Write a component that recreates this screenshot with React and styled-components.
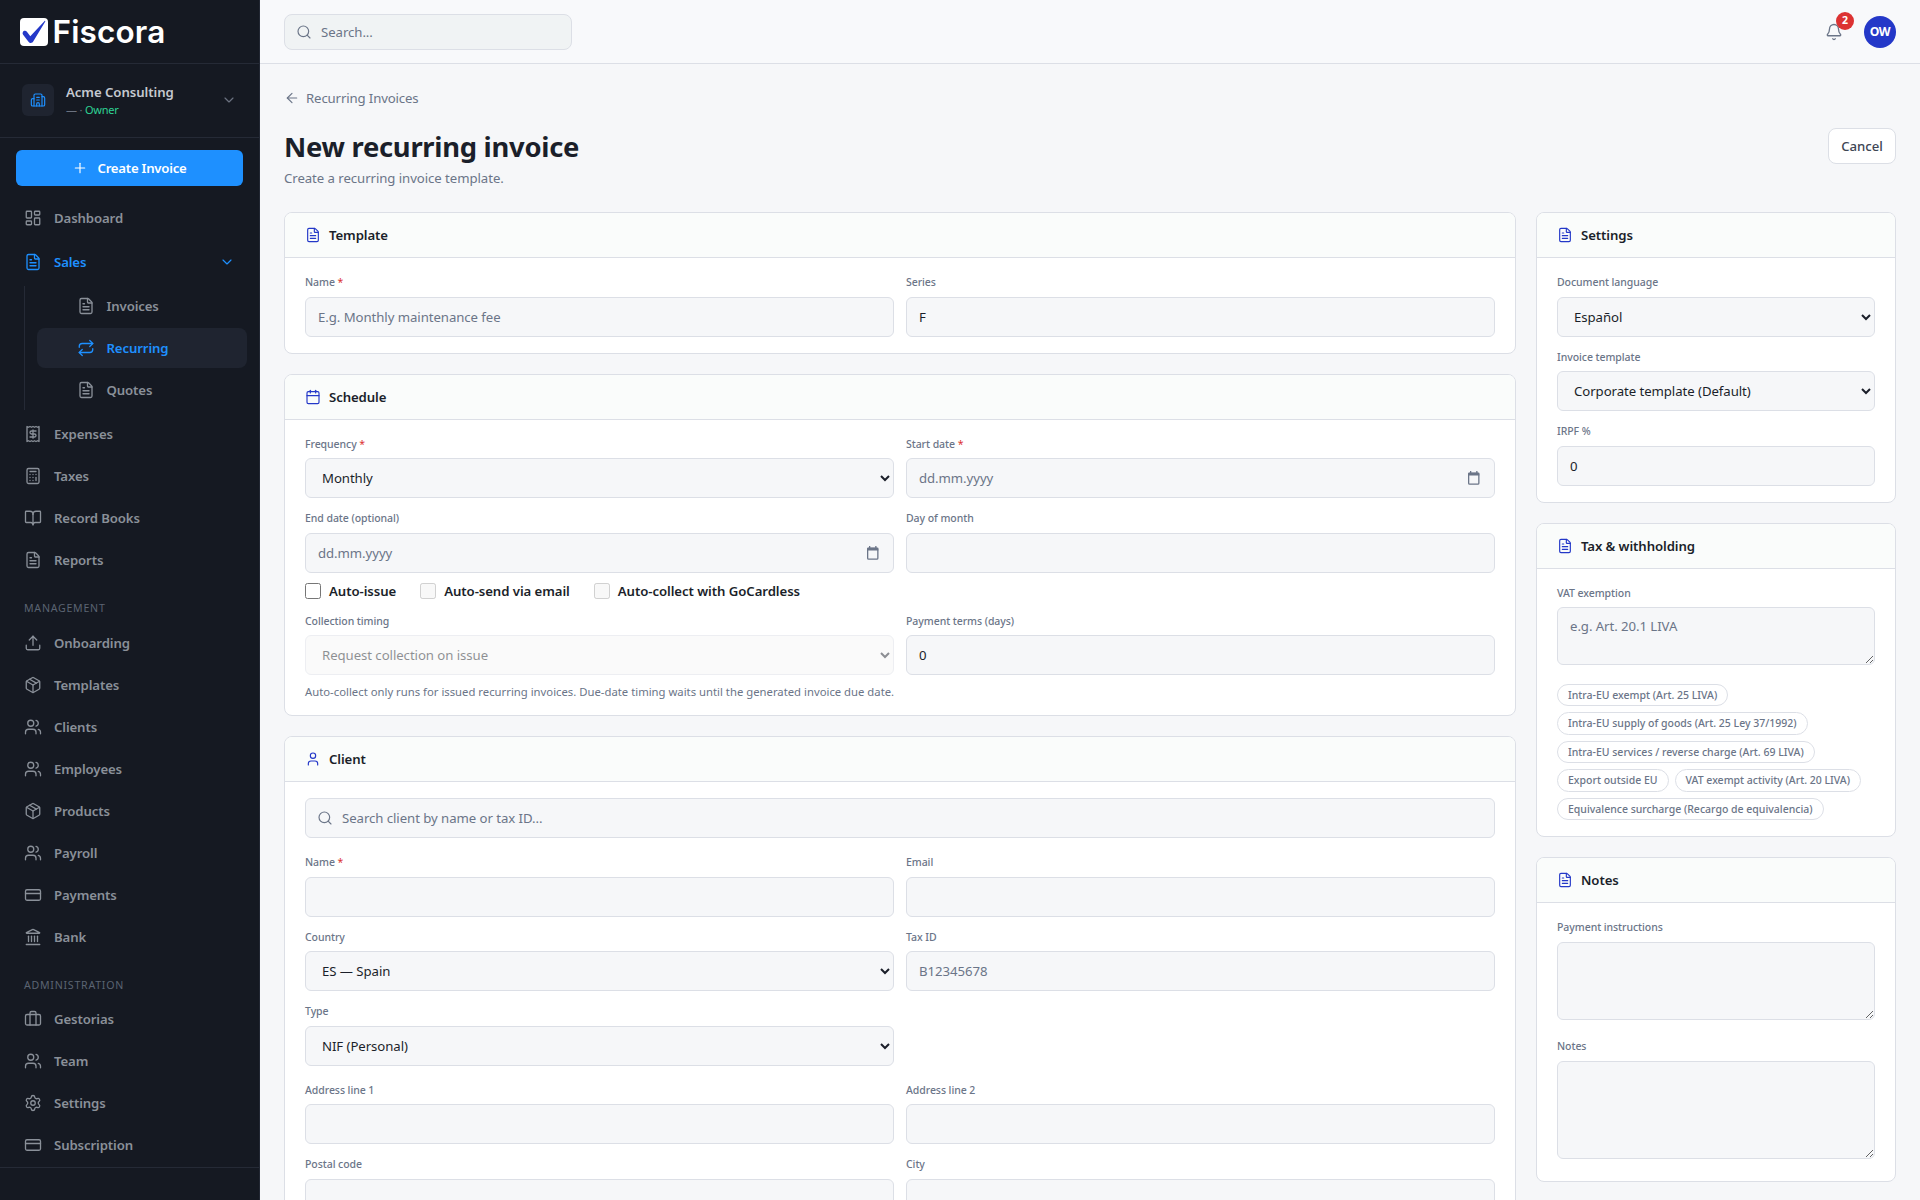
import React from "react";
import styled, { createGlobalStyle, css } from "styled-components";
import {
  ArrowLeft,
  Bell,
  BookOpen,
  Briefcase,
  Building2,
  Calculator,
  Calendar,
  ChevronDown,
  CreditCard,
  FileText,
  Landmark,
  LayoutDashboard,
  Package,
  Plus,
  Receipt,
  Repeat,
  Search,
  Settings,
  Upload,
  User,
  Users,
} from "lucide-react";

const GlobalStyle = createGlobalStyle`
  * {
    box-sizing: border-box;
  }
  body {
    margin: 0;
    overflow: hidden;
    background-color: #f6f7f9;
    color: #1b1f2a;
    font-family: "Noto Sans", "Open Sans", sans-serif;
    font-size: 13.2px;
    letter-spacing: -0.06px;
  }
  input, select, textarea, button {
    font-family: inherit;
    font-size: inherit;
    letter-spacing: inherit;
  }
`;

const Layout = styled.div`
  display: flex;
  width: 1920px;
  height: 1200px;
  overflow: hidden;
`;

/* ---------- sidebar ---------- */

const Sidebar = styled.aside`
  width: 260px;
  flex-shrink: 0;
  display: flex;
  flex-direction: column;
  background-color: #151922;
  border-right: 1px solid #222733;
`;

const LogoRow = styled.div`
  height: 64px;
  flex-shrink: 0;
  display: flex;
  align-items: center;
  gap: 4.5px;
  padding-left: 20px;
  border-bottom: 1px solid #252a36;
`;

const LogoText = styled.span`
  padding-top: 1px;
  font-family: Inter, sans-serif;
  font-size: 31.5px;
  font-weight: 600;
  line-height: 32px;
  letter-spacing: 0.15px;
  color: #ffffff;
`;

const TeamSwitcher = styled.div`
  height: 74px;
  flex-shrink: 0;
  display: flex;
  align-items: center;
  padding: 0 22px 2px;
  border-bottom: 1px solid #252a36;
  color: #6b7280;
`;

const TeamIcon = styled.div`
  width: 32px;
  height: 32px;
  display: flex;
  align-items: center;
  justify-content: center;
  margin-right: 12px;
  border-radius: 6px;
  background-color: #1f2430;
  color: #1e90ff;
`;

const TeamInfo = styled.div`
  flex: 1;
`;

const TeamName = styled.div`
  font-size: 13.2px;
  font-weight: 600;
  line-height: 20px;
  color: #c5c9d1;
`;

const TeamRole = styled.div`
  font-size: 11px;
  line-height: 16px;
  letter-spacing: -0.2px;
  color: #6b7280;
  span {
    color: #2ed394;
  }
`;

const CreateButton = styled.button`
  height: 36px;
  flex-shrink: 0;
  display: flex;
  align-items: center;
  justify-content: center;
  gap: 9px;
  margin: 12px 16px;
  border: none;
  border-radius: 6px;
  background-color: #1e90ff;
  color: #ffffff;
  font-size: 13.2px;
  font-weight: 600;
  letter-spacing: -0.25px;
`;

const Nav = styled.nav`
  flex: 1;
  display: flex;
  flex-direction: column;
  gap: 2px;
  padding: 0 12px;
`;

const NavItem = styled.div`
  height: 40px;
  flex-shrink: 0;
  display: flex;
  align-items: center;
  gap: ${(props) => (props.$nested ? "11.5px" : "12px")};
  padding: 0 12px 0 ${(props) => (props.$nested ? "40px" : "12px")};
  border-radius: 8px;
  color: ${(props) => (props.$active ? "#1e90ff" : "#8a9099")};
  background-color: ${(props) => (props.$selected ? "#1f2430" : "transparent")};
  font-weight: 600;
  letter-spacing: -0.12px;
  span {
    flex: 1;
  }
`;

const SubNav = styled.div`
  display: flex;
  flex-direction: column;
  gap: 2px;
  margin: 4px 0 2px 12px;
  padding-left: 12px;
  border-left: 1px solid #252a36;
`;

const NavGroup = styled.div`
  padding-top: 2px;
`;

const NavHeading = styled.div`
  height: 38.5px;
  flex-shrink: 0;
  padding: 18px 12px 0;
  font-size: 10.6px;
  line-height: 16px;
  letter-spacing: 0.75px;
  color: #5b6472;
`;

const SidebarFooter = styled.div`
  height: 33px;
  flex-shrink: 0;
  border-top: 1px solid #252a36;
`;

/* ---------- top bar ---------- */

const Main = styled.div`
  flex: 1;
  min-width: 0;
`;

const TopBar = styled.header`
  height: 64px;
  display: flex;
  align-items: center;
  justify-content: space-between;
  padding: 0 24px;
  background-color: #f8f9fb;
  border-bottom: 1px solid #dcdfe6;
`;

const SearchBox = styled.div`
  width: 288px;
  height: 36px;
  display: flex;
  align-items: center;
  gap: 9px;
  padding: 0 11px;
  border: 1px solid #dcdfe6;
  border-radius: 8px;
  background-color: #f0f3f4;
  color: #6b7588;
`;

const TopActions = styled.div`
  display: flex;
  align-items: center;
  gap: 21px;
`;

const BellButton = styled.div`
  position: relative;
  display: flex;
  color: #6b7588;
`;

const Badge = styled.span`
  position: absolute;
  top: -11px;
  left: 11px;
  width: 18px;
  height: 18px;
  border-radius: 50%;
  background-color: #dc3232;
  color: #ffffff;
  font-size: 10.5px;
  font-weight: 700;
  line-height: 17px;
  text-align: center;
`;

const Avatar = styled.div`
  width: 32px;
  height: 32px;
  border-radius: 50%;
  background-color: #2438c8;
  color: #ffffff;
  font-size: 12.2px;
  font-weight: 700;
  line-height: 32px;
  letter-spacing: -0.3px;
  text-align: center;
`;

/* ---------- page ---------- */

const Page = styled.main`
  padding: 24px;
`;

const BackLink = styled.div`
  display: flex;
  align-items: center;
  gap: 6px;
  height: 20px;
  color: #6b7588;
  letter-spacing: -0.13px;
`;

const PageHeader = styled.div`
  height: 84px;
  display: flex;
  justify-content: space-between;
  margin-top: 20px;
`;

const Title = styled.h1`
  margin: 0;
  height: 40px;
  font-size: 27.4px;
  font-weight: 700;
  line-height: 38.5px;
  letter-spacing: -0.28px;
`;

const Subtitle = styled.p`
  margin: 0;
  line-height: 20px;
  color: #6b7588;
`;

const CancelButton = styled.button`
  width: 68px;
  height: 36px;
  padding: 0;
  border: 1px solid #dcdfe6;
  border-radius: 8px;
  background-color: #ffffff;
  color: #3e4654;
  font-weight: 500;
`;

const Columns = styled.div`
  display: grid;
  grid-template-columns: 1232px 360px;
  gap: 20px;
  align-items: start;
`;

const Column = styled.div`
  display: flex;
  flex-direction: column;
  gap: 20px;
`;

const CardBox = styled.section`
  border: 1px solid #dcdfe6;
  border-radius: 8px;
  background-color: #ffffff;
  overflow: hidden;
`;

const CardHeader = styled.div`
  height: 45px;
  display: flex;
  align-items: center;
  gap: 8px;
  padding: 0 20px;
  border-bottom: 1px solid #dcdfe6;
  background-color: #fafcfb;
  font-weight: 600;
  letter-spacing: -0.1px;
  svg {
    color: #2438c8;
  }
`;

const CardBody = styled.div`
  padding: 16px 20px;
`;

const FieldGrid = styled.div`
  display: grid;
  grid-template-columns: repeat(${(props) => props.$columns || 2}, 1fr);
  gap: 12px;
`;

const FieldBox = styled.div`
  display: flow-root;
  min-width: 0;
`;

const Label = styled.label`
  display: block;
  margin-bottom: 6px;
  font-size: 10.5px;
  font-weight: 500;
  line-height: 16.5px;
  color: #6b7588;
  span {
    color: #dc3232;
    font-weight: 400;
  }
`;

const control = css`
  display: block;
  width: 100%;
  border: 1px solid #dcdfe6;
  border-radius: 6px;
  background-color: #f6f7f9;
  color: #1b1f2a;
  outline: none;
  &::placeholder {
    color: #6b7588;
    opacity: 1;
  }
`;

const Input = styled.input`
  ${control}
  height: 40px;
  padding: 0 12px;
`;

const Select = styled.select`
  ${control}
  height: 40px;
  padding: 0 0 0 12px;
  &:disabled {
    background-color: #f6f6f6;
    color: #1b1f2a;
    opacity: 0.5;
  }
`;

const TextArea = styled.textarea`
  ${control}
  height: ${(props) => props.$height}px;
  margin-bottom: 6.5px;
  padding: 8px 12px;
  line-height: 20px;
`;

const FakeInput = styled.div`
  ${control}
  height: 40px;
  display: flex;
  align-items: center;
  gap: 9px;
  padding: ${(props) => (props.$spread ? "0 13px 0 12px" : "0 11px")};
  color: #6b7588;
  justify-content: ${(props) => (props.$spread ? "space-between" : "flex-start")};
`;

const CheckRow = styled.div`
  height: 20px;
  display: flex;
  align-items: center;
  gap: 24px;
  margin: 8px 0 12px;
`;

const CheckLabel = styled.label`
  display: flex;
  align-items: center;
  gap: 8px;
  font-weight: 600;
  letter-spacing: -0.07px;
  input {
    width: 16px;
    height: 16px;
    margin: 0;
  }
`;

const Hint = styled.p`
  height: 18px;
  margin: 6px 0 0;
  padding-top: 1.5px;
  font-size: 11.3px;
  line-height: 18px;
  letter-spacing: 0;
  color: #6b7588;
`;

const Gap = styled.div`
  height: 16px;
`;

const Pills = styled.div`
  display: flex;
  flex-wrap: wrap;
  gap: 6px;
  margin-top: 12px;
`;

const Pill = styled.span`
  height: 22.5px;
  padding: 0 10px;
  border: 1px solid #dcdfe6;
  border-radius: 12px;
  color: #6b7588;
  font-size: 10.5px;
  font-weight: 500;
  line-height: 20px;
  letter-spacing: 0;
`;

const mainNav = [
  { label: "Expenses", icon: Receipt },
  { label: "Taxes", icon: Calculator },
  { label: "Record Books", icon: BookOpen },
  { label: "Reports", icon: FileText },
];

const salesNav = [
  { label: "Invoices", icon: FileText },
  { label: "Recurring", icon: Repeat, active: true },
  { label: "Quotes", icon: FileText },
];

const managementNav = [
  { label: "Onboarding", icon: Upload },
  { label: "Templates", icon: Package },
  { label: "Clients", icon: Users },
  { label: "Employees", icon: Users },
  { label: "Products", icon: Package },
  { label: "Payroll", icon: Users },
  { label: "Payments", icon: CreditCard },
  { label: "Bank", icon: Landmark },
];

const adminNav = [
  { label: "Gestorias", icon: Briefcase },
  { label: "Team", icon: Users },
  { label: "Settings", icon: Settings },
  { label: "Subscription", icon: CreditCard },
];

const exemptions = [
  "Intra-EU exempt (Art. 25 LIVA)",
  "Intra-EU supply of goods (Art. 25 Ley 37/1992)",
  "Intra-EU services / reverse charge (Art. 69 LIVA)",
  "Export outside EU",
  "VAT exempt activity (Art. 20 LIVA)",
  "Equivalence surcharge (Recargo de equivalencia)",
];

const LogoMark = () => (
  <svg width="28" height="28" viewBox="0 0 28 28">
    <rect width="28" height="28" rx="4" fill="#ffffff" />
    <path
      d="M2.800 14.200c.9-1.800 3.200-1.700 4.300-.2l3.200 4.200L24.600 3c.4-.4.900 0 .7.500L13.200 23.600c-1.100 1.900-3.500 1.900-4.700.1L3.100 16.800c-.6-.8-.7-1.700-.3-2.600z"
      fill="#2438c8"
    />
  </svg>
);

const CalendarMark = () => (
  <svg width="14" height="16" viewBox="0 0 14 16" fill="none">
    <rect x="1.650" y="3.150" width="10.200" height="11" rx="1" stroke="#6b7588" strokeWidth="1.300" />
    <path d="M1.200 2.800h11.100v2.700H1.200zM3 1h1.300v2H3zM9.200 1h1.300v2H9.200z" fill="#6b7588" />
  </svg>
);

const NavLinks = ({ items, nested }) =>
  items.map(({ label, icon: Icon, active }) => (
    <NavItem key={label} $nested={nested} $active={active} $selected={active}>
      <Icon size={18} strokeWidth={1.75} />
      <span>{label}</span>
    </NavItem>
  ));

const Card = ({ title, icon: Icon = FileText, children }) => (
  <CardBox>
    <CardHeader>
      <Icon size={16} strokeWidth={1.75} />
      {title}
    </CardHeader>
    <CardBody>{children}</CardBody>
  </CardBox>
);

const Field = ({ label, required, children }) => (
  <FieldBox>
    <Label>
      {label}
      {required && <span> *</span>}
    </Label>
    {children || <Input />}
  </FieldBox>
);

const Dropdown = ({ value, disabled }) => (
  <Select disabled={disabled}>
    <option>{value}</option>
  </Select>
);

const DateInput = () => (
  <FakeInput $spread>
    dd.mm.yyyy
    <CalendarMark />
  </FakeInput>
);

const App = () => {
  return (
    <Layout>
      <GlobalStyle />
      <Sidebar>
        <LogoRow>
          <LogoMark />
          <LogoText>Fiscora</LogoText>
        </LogoRow>
        <TeamSwitcher>
          <TeamIcon>
            <Building2 size={16} strokeWidth={1.75} />
          </TeamIcon>
          <TeamInfo>
            <TeamName>Acme Consulting</TeamName>
            <TeamRole>
              — · <span>Owner</span>
            </TeamRole>
          </TeamInfo>
          <ChevronDown size={16} strokeWidth={1.75} />
        </TeamSwitcher>
        <CreateButton>
          <Plus size={16} strokeWidth={1.75} />
          Create Invoice
        </CreateButton>
        <Nav>
          <NavItem>
            <LayoutDashboard size={18} strokeWidth={1.75} />
            <span>Dashboard</span>
          </NavItem>
          <NavGroup>
            <NavItem $active>
              <FileText size={18} strokeWidth={1.75} />
              <span>Sales</span>
              <ChevronDown size={16} strokeWidth={1.75} />
            </NavItem>
            <SubNav>
              <NavLinks items={salesNav} nested />
            </SubNav>
          </NavGroup>
          <NavLinks items={mainNav} />
          <NavHeading>MANAGEMENT</NavHeading>
          <NavLinks items={managementNav} />
          <NavHeading>ADMINISTRATION</NavHeading>
          <NavLinks items={adminNav} />
        </Nav>
        <SidebarFooter />
      </Sidebar>

      <Main>
        <TopBar>
          <SearchBox>
            <Search size={16} strokeWidth={1.75} />
            Search...
          </SearchBox>
          <TopActions>
            <BellButton>
              <Bell size={18} strokeWidth={1.75} />
              <Badge>2</Badge>
            </BellButton>
            <Avatar>OW</Avatar>
          </TopActions>
        </TopBar>
        <Page>
          <BackLink>
            <ArrowLeft size={16} strokeWidth={1.75} />
            Recurring Invoices
          </BackLink>
          <PageHeader>
            <div>
              <Title>New recurring invoice</Title>
              <Subtitle>Create a recurring invoice template.</Subtitle>
            </div>
            <CancelButton>Cancel</CancelButton>
          </PageHeader>
          <Columns>
            <Column>
              <Card title="Template">
                <FieldGrid>
                  <Field label="Name" required>
                    <Input placeholder="E.g. Monthly maintenance fee" />
                  </Field>
                  <Field label="Series">
                    <Input defaultValue="F" />
                  </Field>
                </FieldGrid>
              </Card>
              <Card title="Schedule" icon={Calendar}>
                <FieldGrid>
                  <Field label="Frequency" required>
                    <Dropdown value="Monthly" />
                  </Field>
                  <Field label="Start date" required>
                    <DateInput />
                  </Field>
                  <Field label="End date (optional)">
                    <DateInput />
                  </Field>
                  <Field label="Day of month" />
                </FieldGrid>
                <CheckRow>
                  <CheckLabel>
                    <input type="checkbox" />
                    Auto-issue
                  </CheckLabel>
                  <CheckLabel>
                    <input type="checkbox" disabled />
                    Auto-send via email
                  </CheckLabel>
                  <CheckLabel>
                    <input type="checkbox" disabled />
                    Auto-collect with GoCardless
                  </CheckLabel>
                </CheckRow>
                <FieldGrid>
                  <Field label="Collection timing">
                    <Dropdown value="Request collection on issue" disabled />
                  </Field>
                  <Field label="Payment terms (days)">
                    <Input defaultValue="0" />
                  </Field>
                </FieldGrid>
                <Hint>
                  Auto-collect only runs for issued recurring invoices. Due-date timing waits until the
                  generated invoice due date.
                </Hint>
              </Card>
              <Card title="Client" icon={User}>
                <FakeInput>
                  <Search size={16} strokeWidth={1.75} />
                  Search client by name or tax ID...
                </FakeInput>
                <Gap />
                <FieldGrid>
                  <Field label="Name" required />
                  <Field label="Email" />
                  <Field label="Country">
                    <Dropdown value="ES — Spain" />
                  </Field>
                  <Field label="Tax ID">
                    <Input placeholder="B12345678" />
                  </Field>
                  <Field label="Type">
                    <Dropdown value="NIF (Personal)" />
                  </Field>
                </FieldGrid>
                <Gap />
                <FieldGrid>
                  <Field label="Address line 1" />
                  <Field label="Address line 2" />
                  <Field label="Postal code" />
                  <Field label="City" />
                </FieldGrid>
              </Card>
            </Column>
            <Column>
              <Card title="Settings">
                <FieldGrid $columns={1}>
                  <Field label="Document language">
                    <Dropdown value="Español" />
                  </Field>
                  <Field label="Invoice template">
                    <Dropdown value="Corporate template (Default)" />
                  </Field>
                  <Field label="IRPF %">
                    <Input defaultValue="0" />
                  </Field>
                </FieldGrid>
              </Card>
              <Card title="Tax & withholding">
                <Field label="VAT exemption">
                  <TextArea $height={58} placeholder="e.g. Art. 20.1 LIVA" />
                </Field>
                <Pills>
                  {exemptions.map((text) => (
                    <Pill key={text}>{text}</Pill>
                  ))}
                </Pills>
              </Card>
              <Card title="Notes">
                <FieldGrid $columns={1}>
                  <Field label="Payment instructions">
                    <TextArea $height={78} />
                  </Field>
                  <Field label="Notes">
                    <TextArea $height={98} />
                  </Field>
                </FieldGrid>
              </Card>
            </Column>
          </Columns>
        </Page>
      </Main>
    </Layout>
  );
};

export default App;
